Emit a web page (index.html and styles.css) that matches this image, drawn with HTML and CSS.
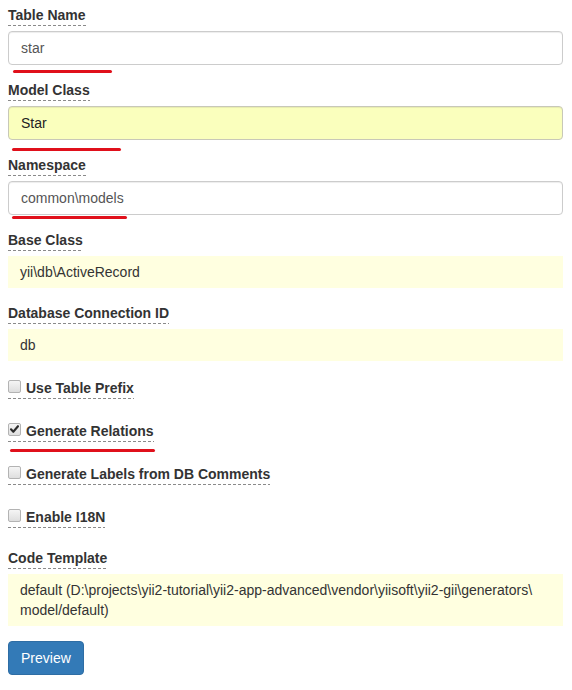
FILE: index.html
```html
<!DOCTYPE html>
<html lang="en">
<head>
<meta charset="utf-8">
<title>Model Generator</title>
<link rel="stylesheet" href="styles.css">
</head>
<body>
<div class="page">
  <form class="gen-form">
    <div class="form-group">
      <label class="help">Table Name</label>
      <input class="form-control" type="text" value="star">
      <span class="mark mark-table"></span>
    </div>

    <div class="form-group">
      <label class="help">Model Class</label>
      <input class="form-control autofill" type="text" value="Star">
      <span class="mark mark-model"></span>
    </div>

    <div class="form-group">
      <label class="help">Namespace</label>
      <input class="form-control" type="text" value="common\models">
      <span class="mark mark-ns"></span>
    </div>

    <div class="form-group">
      <label class="help">Base Class</label>
      <div class="sticky-value">yii\db\ActiveRecord</div>
    </div>

    <div class="form-group">
      <label class="help">Database Connection ID</label>
      <div class="sticky-value">db</div>
    </div>

    <div class="form-group check-group">
      <label class="help check-label"><span class="cb"></span>Use Table Prefix</label>
    </div>

    <div class="form-group check-group">
      <label class="help check-label"><span class="cb cb-checked"><svg viewBox="0 0 13 13" width="13" height="13"><path d="M3 6.3 L5.3 8.8 L10 3.2" fill="none" stroke="#2b2b2b" stroke-width="2.1" stroke-linecap="round" stroke-linejoin="round"/></svg></span>Generate Relations</label>
      <span class="mark mark-rel"></span>
    </div>

    <div class="form-group check-group">
      <label class="help check-label"><span class="cb"></span>Generate Labels from DB Comments</label>
    </div>

    <div class="form-group check-group">
      <label class="help check-label"><span class="cb"></span>Enable I18N</label>
    </div>

    <div class="form-group">
      <label class="help">Code Template</label>
      <div class="sticky-value">default (D:\projects\yii2-tutorial\yii2-app-advanced\vendor\yiisoft\yii2-gii\generators\<wbr>model/default)</div>
    </div>

    <div class="actions">
      <button type="button" class="btn-primary">Preview</button>
    </div>
  </form>
</div>
</body>
</html>
```

FILE: styles.css
```css
* {
  box-sizing: border-box;
}

html, body {
  margin: 0;
  padding: 0;
  background: #fff;
}

body {
  font-family: "Liberation Sans", Arial, Helvetica, sans-serif;
  font-size: 14px;
  line-height: 20px;
  color: #333;
}

.page {
  padding: 5px 9px 0 8px;
}

.gen-form {
  display: flex;
  flex-direction: column;
}

.form-group {
  position: relative;
  display: flex;
  flex-direction: column;
  align-items: flex-start;
  margin-bottom: 15px;
}

.help {
  display: inline-block;
  font-weight: bold;
  line-height: 20px;
  color: #333;
  padding-bottom: 1px;
  margin-bottom: 5px;
  background-image: repeating-linear-gradient(to right, #8a8a8a 0, #8a8a8a 3px, transparent 3px, transparent 5px);
  background-size: 100% 1px;
  background-repeat: no-repeat;
  background-position: left bottom;
  cursor: help;
}

.form-control {
  display: block;
  width: 100%;
  height: 34px;
  padding: 6px 12px;
  font-family: inherit;
  font-size: 14px;
  line-height: 20px;
  color: #555;
  background: #fff;
  border: 1px solid #ccc;
  border-radius: 4px;
  box-shadow: inset 0 1px 1px rgba(0, 0, 0, 0.075);
  outline: none;
  margin: 0;
}

.form-control.autofill {
  background: #faffbd;
  color: #222;
  border-color: #c8c8b8;
}

.sticky-value {
  width: 100%;
  padding: 6px 12px;
  background: #ffffe0;
  color: #333;
  line-height: 20px;
  white-space: pre-wrap;
  overflow-wrap: break-word;
}

.check-group {
  padding-top: 2px;
  margin-bottom: 20px;
}

.check-label {
  display: inline-flex;
  align-items: flex-start;
  margin-bottom: 0;
}

.cb {
  flex: none;
  width: 13px;
  height: 13px;
  margin-top: 2px;
  margin-right: 5px;
  border: 1px solid #b3b3b3;
  border-radius: 2px;
  background: linear-gradient(#f5f5f5, #dedede);
  position: relative;
}

.cb svg {
  position: absolute;
  left: -1px;
  top: -1px;
}

.mark {
  position: absolute;
  height: 3px;
  background: #e0101b;
  border-radius: 2px;
}

.mark-table {
  top: calc(100% + 5px);
  left: 5px;
  width: 99px;
}

.mark-model {
  top: calc(100% + 8px);
  left: 4px;
  width: 109px;
}

.mark-ns {
  top: calc(100% + 1px);
  left: 4px;
  width: 115px;
}

.mark-rel {
  top: calc(100% + 7px);
  left: 2px;
  width: 145px;
}

.actions {
  display: flex;
}

.btn-primary {
  font-family: inherit;
  font-size: 14px;
  line-height: 20px;
  padding: 6px 12px;
  color: #fff;
  background: #337ab7;
  border: 1px solid #2e6da4;
  border-radius: 4px;
  cursor: pointer;
}
```
